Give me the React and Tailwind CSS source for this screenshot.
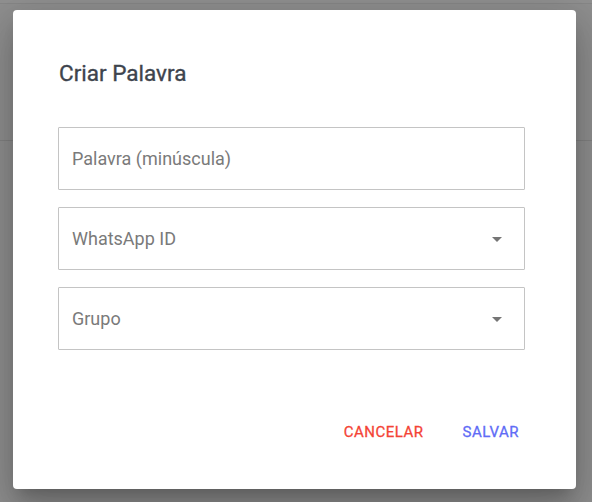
import React from "react";

function ArrowDrop() {
  return (
    <svg width="24" height="24" viewBox="0 0 24 24" className="absolute right-[15px] top-1/2 -translate-y-1/2" fill="rgba(0,0,0,0.54)">
      <path d="M7 10l5 5 5-5z" />
    </svg>
  );
}

function Field({ label, select }) {
  return (
    <div className="relative h-[63px] w-[467px] border border-[#c4c4c4] rounded-[1px] flex items-center pl-[13px] bg-white">
      <span className="text-[18px] text-[#7a7a7a] leading-none">{label}</span>
      {select && <ArrowDrop />}
    </div>
  );
}

export default function App() {
  return (
    <div className="relative w-[592px] h-[502px] overflow-hidden bg-[#8f8f8f]" style={{ fontFamily: "Roboto, 'Noto Sans', sans-serif" }}>
      {/* background page (dimmed) */}
      <div className="flex flex-col h-full">
        <div className="h-[4px] border-b border-[#878787] bg-[#919191]" />
        <div className="h-[137px] border-b border-[#828282]" />
        <div className="flex-1" />
      </div>

      {/* dialog overlay */}
      <div className="absolute left-[13px] top-[10px] w-[563px] h-[479px] bg-white rounded-[4px] shadow-[0px_11px_15px_-7px_rgba(0,0,0,0.2),0px_24px_38px_3px_rgba(0,0,0,0.14),0px_9px_46px_8px_rgba(0,0,0,0.12)] flex flex-col">
        <h2 className="mt-[47px] ml-[46px] text-[22.5px] leading-[32px] font-normal text-[#3e444d] [-webkit-text-stroke:0.35px_#3e444d]">
          Criar Palavra
        </h2>
        <div className="mt-[38px] ml-[45px] flex flex-col gap-[17px]">
          <Field label="Palavra (minúscula)" />
          <Field label="WhatsApp ID" select />
          <Field label="Grupo" select />
        </div>
        <div className="mt-[70px] flex justify-end items-center gap-[39px] pr-[57px]">
          <span className="text-[15px] font-normal uppercase tracking-[0.5px] text-[#f44336] leading-[24px] [-webkit-text-stroke:0.3px_#f44336]">Cancelar</span>
          <span className="text-[15px] font-normal uppercase tracking-[0.5px] text-[#5f6cf6] leading-[24px] [-webkit-text-stroke:0.3px_#5f6cf6]">Salvar</span>
        </div>
      </div>
    </div>
  );
}
